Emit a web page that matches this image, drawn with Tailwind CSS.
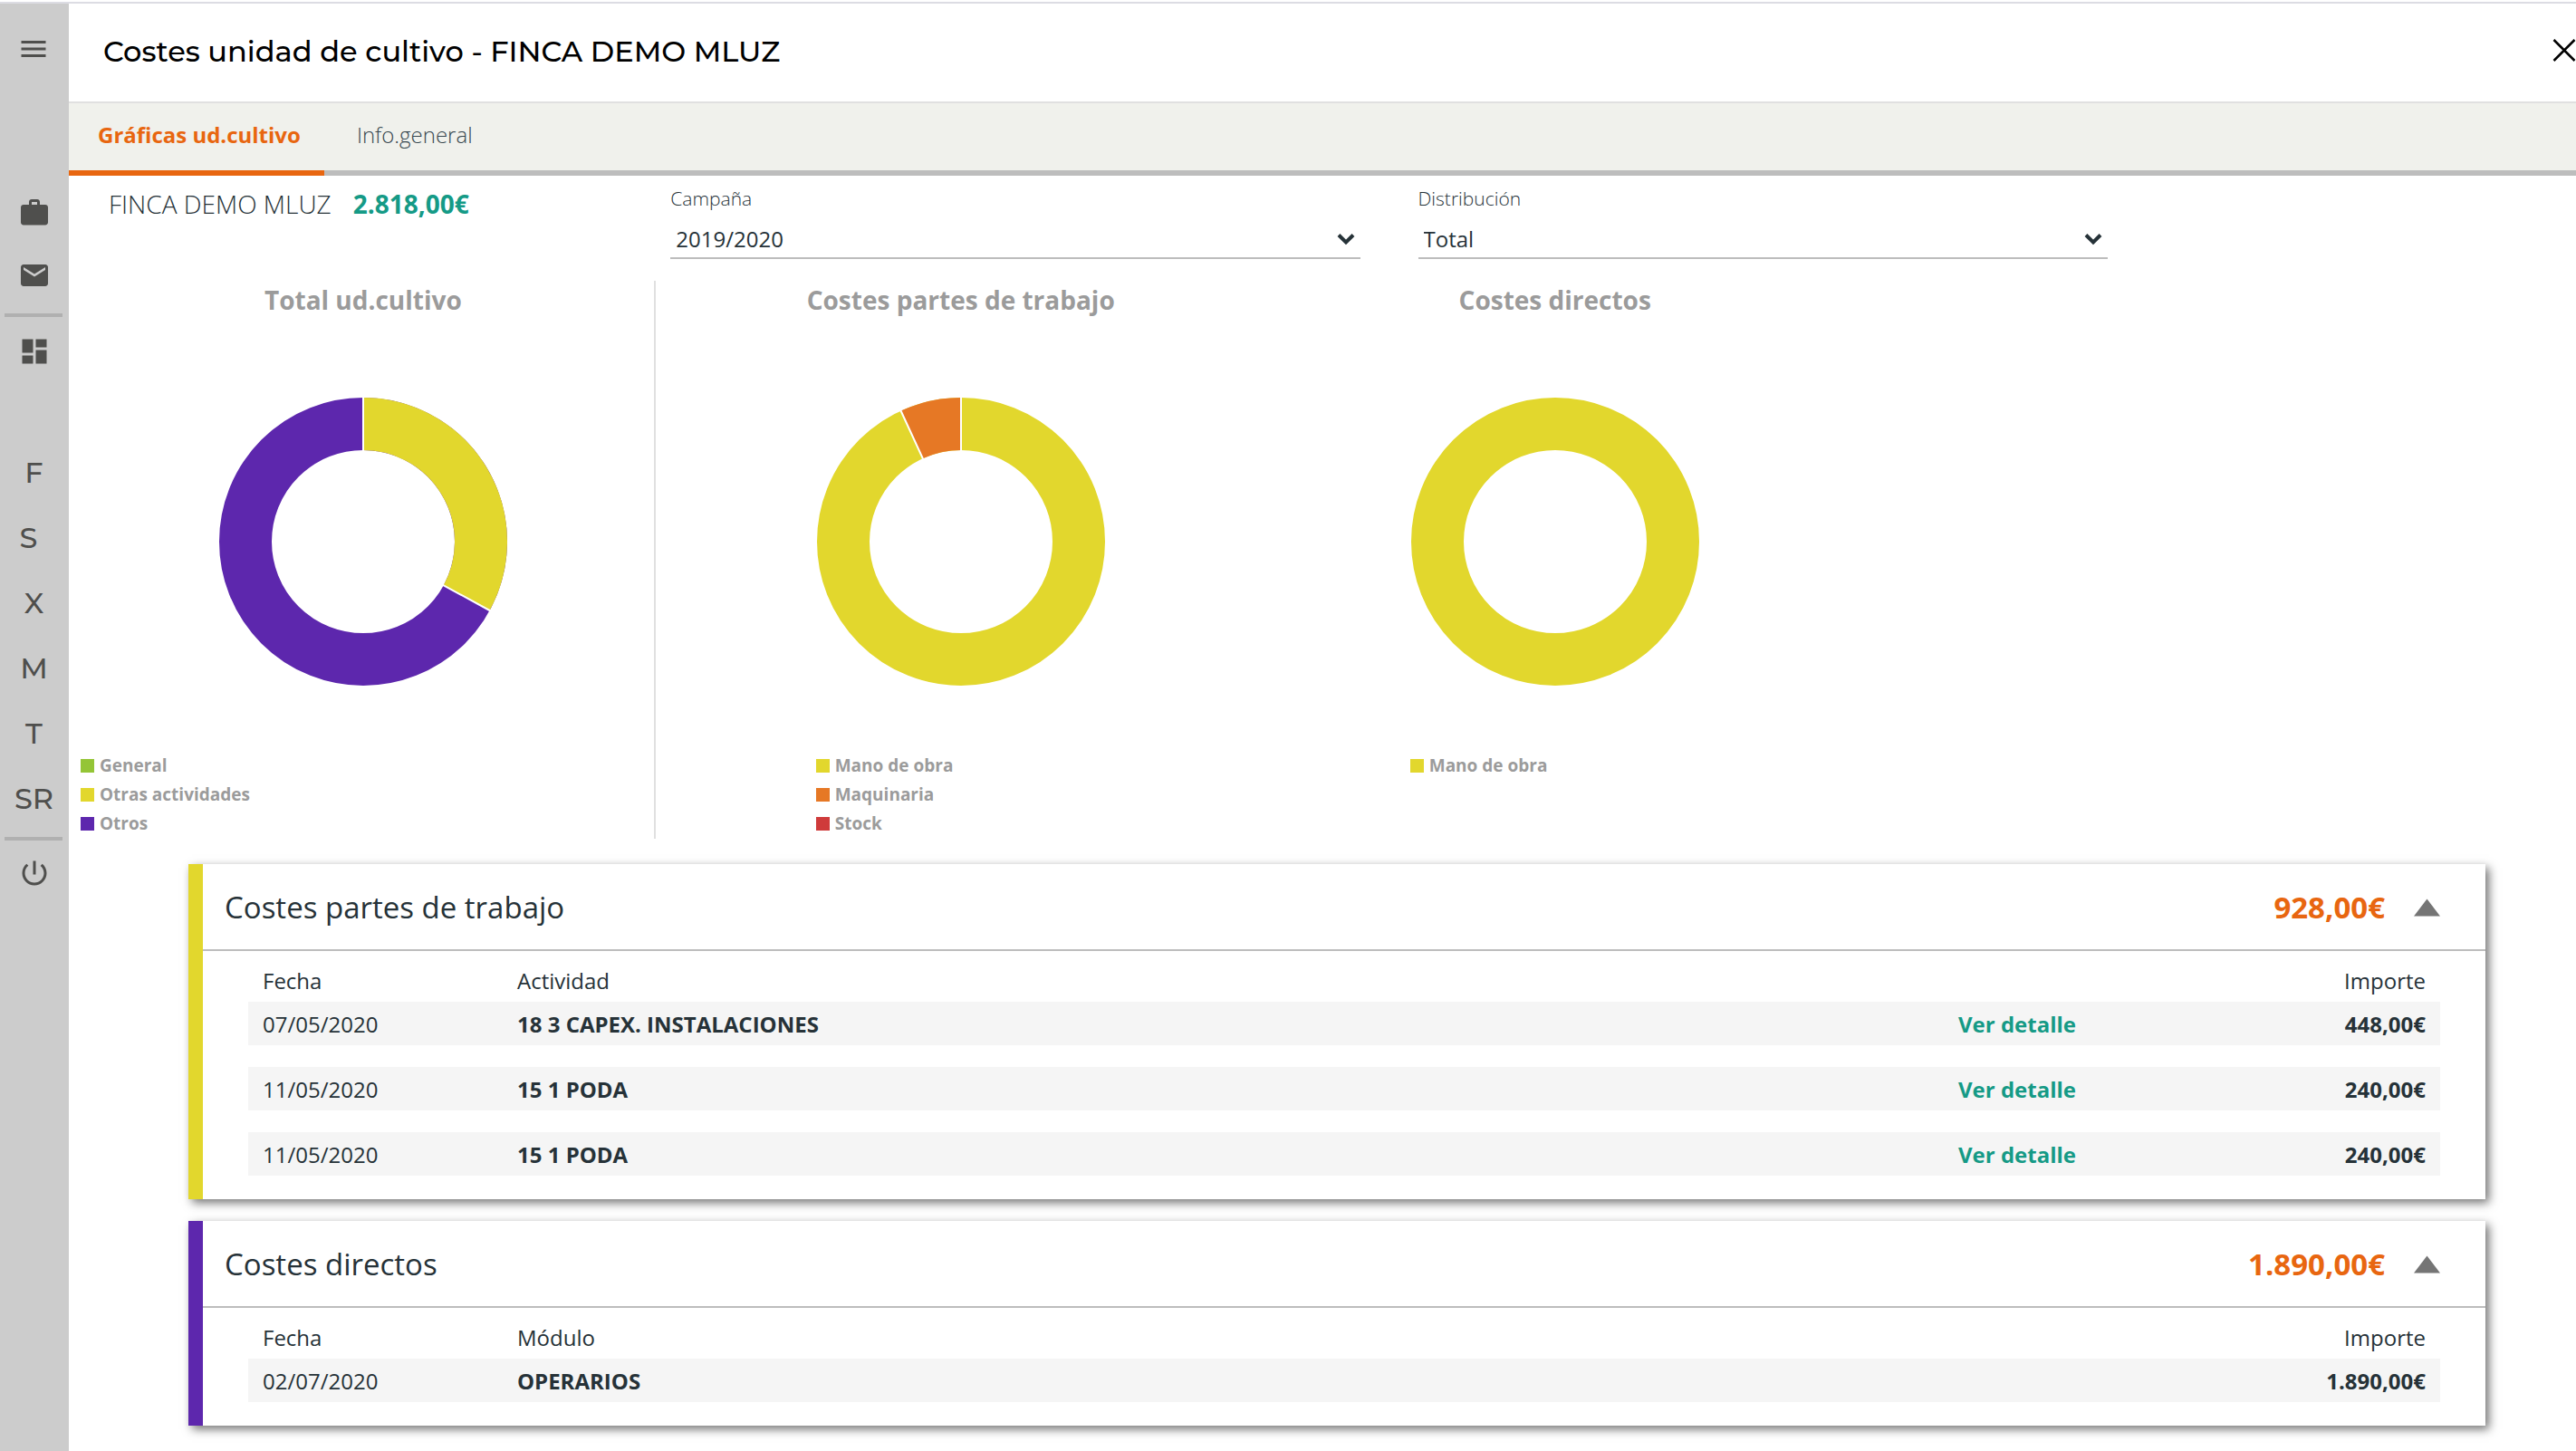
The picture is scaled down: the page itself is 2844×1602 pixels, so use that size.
<!DOCTYPE html>
<html lang="es">
<head>
<meta charset="utf-8">
<meta name="viewport" content="width=device-width, initial-scale=1">
<title>Costes unidad de cultivo - FINCA DEMO MLUZ</title>
<script src="https://cdn.jsdelivr.net/npm/@tailwindcss/browser@4"></script>
</head>
<body class="flex min-h-screen flex-col bg-white font-['Open_Sans',sans-serif] text-2xl text-[#263238]">
<div class="mt-0.5 h-0.5 shrink-0 bg-[#dcdce3]"></div>
<div class="flex flex-1">

  <!-- Sidebar -->
  <nav aria-label="Menú principal" class="flex w-19 shrink-0 flex-col items-center bg-[#cccccc] pt-8 pr-px font-['Montserrat','Inter',sans-serif] text-[32px] font-medium text-[#4f4f4d]">
    <button type="button" aria-label="Menú" class="mr-0.5"><svg class="size-9" viewBox="0 0 24 24" fill="currentColor"><path d="M3 18h18v-2H3v2zm0-5h18v-2H3v2zm0-7v2h18V6H3z"/></svg></button>
    <a href="#" aria-label="Trabajo" class="mt-[145px]"><svg class="size-9" viewBox="0 0 24 24" fill="currentColor"><path d="M20 6h-4V4c0-1.110-.89-2-2-2h-4c-1.110 0-2 .89-2 2v2H4c-1.110 0-1.990.89-1.990 2L2 19c0 1.110.89 2 2 2h16c1.110 0 2-.89 2-2V8c0-1.110-.89-2-2-2zm-6 0h-4V4h4v2z"/></svg></a>
    <a href="#" aria-label="Correo" class="mt-[33px]"><svg class="size-9" viewBox="0 0 24 24" fill="currentColor"><path d="M20 4H4c-1.100 0-1.990.9-1.990 2L2 18c0 1.100.9 2 2 2h16c1.100 0 2-.9 2-2V6c0-1.100-.9-2-2-2zm0 4l-8 5-8-5V6l8 5 8-5v2z"/></svg></a>
    <hr class="mt-6 mr-0.5 h-1 w-16 border-0 bg-[#b0b0b0]">
    <a href="#" aria-label="Panel" class="mt-5"><svg class="size-9" viewBox="0 0 24 24" fill="currentColor"><path d="M3 13h8V3H3v10zm0 8h8v-6H3v6zm10 0h8V11h-8v10zm0-18v6h8V3h-8z"/></svg></a>
    <a href="#" class="mt-20 flex h-18 items-center">F</a>
    <a href="#" class="mr-3 flex h-18 items-center">S</a>
    <a href="#" class="flex h-18 items-center">X</a>
    <a href="#" class="flex h-18 items-center">M</a>
    <a href="#" class="flex h-18 items-center">T</a>
    <a href="#" class="flex h-18 items-center">SR</a>
    <hr class="mt-1.5 mr-0.5 h-1 w-16 border-0 bg-[#b0b0b0]">
    <button type="button" aria-label="Salir" class="mt-4.5"><svg class="size-9" viewBox="0 0 24 24" fill="currentColor"><path d="M13 3h-2v10h2V3zm4.830 2.170l-1.420 1.420C17.990 7.860 19 9.810 19 12c0 3.870-3.130 7-7 7s-7-3.130-7-7c0-2.190 1.010-4.140 2.580-5.420L6.170 5.170C4.230 6.820 3 9.260 3 12c0 4.970 4.030 9 9 9s9-4.030 9-9c0-2.740-1.230-5.180-3.170-6.830z"/></svg></button>
  </nav>

  <main class="min-w-0 flex-1">
    <header class="flex h-[110px] items-center justify-between border-b-2 border-[#e0e0e0] pb-0.5 pl-[38px]">
      <h1 class="font-['Montserrat','Inter',sans-serif] text-[32px] font-medium text-black">Costes unidad de cultivo - FINCA DEMO MLUZ</h1>
      <button type="button" aria-label="Cerrar" class="pb-1 text-black"><svg class="size-[26px]" viewBox="0 0 26 26" fill="none" stroke="currentColor" stroke-width="2.500"><path d="M1.500 2l23 23M24.500 2l-23 23"/></svg></button>
    </header>

    <!-- Tabs -->
    <div role="tablist" class="flex h-20 bg-[#f0f1ec]">
      <button type="button" role="tab" aria-selected="true" class="border-b-6 border-[#e86610] pr-[26px] pb-1 pl-8 font-bold text-[#e86610]">Gráficas ud.cultivo</button>
      <button type="button" role="tab" aria-selected="false" class="border-b-6 border-[#bdbdbd] px-9 pb-1 font-light text-[#37474f]">Info.general</button>
      <span class="flex-1 border-b-6 border-[#bdbdbd]"></span>
    </div>

    <!-- Summary and filters -->
    <section class="flex h-[116px] items-start pt-[9px]">
      <p class="flex w-[24%] gap-6 pt-0.5 pl-11 text-[28px] leading-10"><span class="font-light">FINCA DEMO MLUZ</span><strong class="font-bold text-[#159a86]">2.818,00€</strong></p>
      <div class="flex w-[27.5%] flex-col gap-[9px]">
        <label for="campana" class="text-[21px] leading-8 font-light">Campaña</label>
        <div class="relative">
          <select id="campana" class="block h-[42px] w-full appearance-none border-b-2 border-[#bdbdbd] bg-transparent pl-1.5 leading-10"><option>2019/2020</option></select>
          <svg class="pointer-events-none absolute top-3 right-1.5 h-4 w-5" viewBox="0 0 20 16" fill="none" stroke="currentColor" stroke-width="4"><path d="M2 3.500l8 8 8-8"/></svg>
        </div>
      </div>
      <div class="ml-16 flex w-[27.5%] flex-col gap-[9px]">
        <label for="distribucion" class="text-[21px] leading-8 font-light">Distribución</label>
        <div class="relative">
          <select id="distribucion" class="block h-[42px] w-full appearance-none border-b-2 border-[#bdbdbd] bg-transparent pl-1.5 leading-10"><option>Total</option></select>
          <svg class="pointer-events-none absolute top-3 right-1.5 h-4 w-5" viewBox="0 0 20 16" fill="none" stroke="currentColor" stroke-width="4"><path d="M2 3.500l8 8 8-8"/></svg>
        </div>
      </div>
    </section>

    <!-- Charts -->
    <section class="flex text-[19px] font-bold text-[#9b9b9b]">
      <figure class="flex w-[23.4%] flex-col border-r-2 border-[#e0e0e0] pb-px pl-1">
        <h2 class="text-center text-[28px] leading-[42px]">Total ud.cultivo</h2>
        <svg class="mx-auto mt-[86px] size-80" viewBox="-160 -160 320 320" fill="none">
          <circle r="130" stroke="#5d27ad" stroke-width="58"/>
          <path d="M0 -130A130 130 0 0 1 114.200 62.100" stroke="#e2d72d" stroke-width="58"/>
          <path d="M0 -98V-160M86.100 46.800L140.500 76.500" stroke="#fff" stroke-width="2"/>
        </svg>
        <ul class="mt-[71px] pl-[9px] leading-8">
          <li class="flex items-center gap-1.5"><span class="size-[15px] bg-[#94c536]"></span>General</li>
          <li class="flex items-center gap-1.5"><span class="size-[15px] bg-[#e2d72d]"></span>Otras actividades</li>
          <li class="flex items-center gap-1.5"><span class="size-[15px] bg-[#5d27ad]"></span>Otros</li>
        </ul>
      </figure>
      <figure class="ml-[9px] flex w-[23.7%] flex-col items-center">
        <h2 class="text-[28px] leading-[42px]">Costes partes de trabajo</h2>
        <svg class="mt-[86px] size-80" viewBox="-160 -160 320 320" fill="none">
          <circle r="130" stroke="#e2d72d" stroke-width="58"/>
          <path d="M-54.300 -118.100A130 130 0 0 1 0 -130" stroke="#e67825" stroke-width="58"/>
          <path d="M0 -98V-160M-40.900 -89L-66.900 -145.500" stroke="#fff" stroke-width="2"/>
        </svg>
        <ul class="mt-[71px] w-80 leading-8">
          <li class="flex items-center gap-1.5"><span class="size-[15px] bg-[#e2d72d]"></span>Mano de obra</li>
          <li class="flex items-center gap-1.5"><span class="size-[15px] bg-[#e67825]"></span>Maquinaria</li>
          <li class="flex items-center gap-1.5"><span class="size-[15px] bg-[#cf3b3b]"></span>Stock</li>
        </ul>
      </figure>
      <figure class="flex w-[23.7%] flex-col items-center">
        <h2 class="text-[28px] leading-[42px]">Costes directos</h2>
        <svg class="mt-[86px] size-80" viewBox="-160 -160 320 320" fill="none"><circle r="130" stroke="#e2d72d" stroke-width="58"/></svg>
        <ul class="mt-[71px] w-80 leading-8">
          <li class="flex items-center gap-1.5"><span class="size-[15px] bg-[#e2d72d]"></span>Mano de obra</li>
        </ul>
      </figure>
    </section>

    <!-- Cost cards -->
    <div class="mt-7 mr-[100px] mb-7 ml-[132px] flex flex-col gap-6">
      <section class="border-l-16 border-[#e2d72d] bg-white shadow-[4px_4px_10px_rgba(0,0,0,0.55)]">
        <div class="flex h-24 items-center border-b-2 border-[#bdbdbd] pt-0.5 pr-[50px] pl-6 text-[33px]">
          <h2 class="flex-1">Costes partes de trabajo</h2>
          <strong class="font-bold text-[#e86610]">928,00€</strong>
          <button type="button" aria-label="Contraer" class="ml-8 text-[#757575]"><svg class="h-5 w-[29px]" viewBox="0 0 29 20" fill="currentColor"><path d="M14.500 .5L29 19.500H0z"/></svg></button>
        </div>
        <div class="pr-[50px] pb-0.5 pl-[50px]">
          <table class="w-full table-fixed border-separate border-spacing-0 leading-9">
            <colgroup><col class="w-[281px]"><col><col class="w-[274px]"><col class="w-[274px]"></colgroup>
            <thead>
              <tr class="h-14 text-left"><th class="px-4 pt-2.5 font-normal">Fecha</th><th class="px-4 pt-2.5 font-normal">Actividad</th><td></td><th class="px-4 pt-2.5 text-right font-normal">Importe</th></tr>
            </thead>
            <tbody class="[&_td]:h-18 [&_td]:border-b-24 [&_td]:border-transparent [&_td]:bg-[#f5f5f5] [&_td]:bg-clip-padding [&_td]:px-4 [&_td]:pt-0.5">
              <tr><td>07/05/2020</td><td class="font-bold">18 3 CAPEX. INSTALACIONES</td><td><a href="#" class="font-bold text-[#159a86]">Ver detalle</a></td><td class="text-right font-bold">448,00€</td></tr>
              <tr><td>11/05/2020</td><td class="font-bold">15 1 PODA</td><td><a href="#" class="font-bold text-[#159a86]">Ver detalle</a></td><td class="text-right font-bold">240,00€</td></tr>
              <tr><td>11/05/2020</td><td class="font-bold">15 1 PODA</td><td><a href="#" class="font-bold text-[#159a86]">Ver detalle</a></td><td class="text-right font-bold">240,00€</td></tr>
            </tbody>
          </table>
        </div>
      </section>

      <section class="border-l-16 border-[#5d27ad] bg-white shadow-[4px_4px_10px_rgba(0,0,0,0.55)]">
        <div class="flex h-24 items-center border-b-2 border-[#bdbdbd] pt-0.5 pr-[50px] pl-6 text-[33px]">
          <h2 class="flex-1">Costes directos</h2>
          <strong class="font-bold text-[#e86610]">1.890,00€</strong>
          <button type="button" aria-label="Contraer" class="ml-8 text-[#757575]"><svg class="h-5 w-[29px]" viewBox="0 0 29 20" fill="currentColor"><path d="M14.500 .5L29 19.500H0z"/></svg></button>
        </div>
        <div class="pr-[50px] pb-0.5 pl-[50px]">
          <table class="w-full table-fixed border-separate border-spacing-0 leading-9">
            <colgroup><col class="w-[281px]"><col><col class="w-[274px]"></colgroup>
            <thead>
              <tr class="h-14 text-left"><th class="px-4 pt-2.5 font-normal">Fecha</th><th class="px-4 pt-2.5 font-normal">Módulo</th><th class="px-4 pt-2.5 text-right font-normal">Importe</th></tr>
            </thead>
            <tbody class="[&_td]:h-18 [&_td]:border-b-24 [&_td]:border-transparent [&_td]:bg-[#f5f5f5] [&_td]:bg-clip-padding [&_td]:px-4 [&_td]:pt-0.5">
              <tr><td>02/07/2020</td><td class="font-bold">OPERARIOS</td><td class="text-right font-bold">1.890,00€</td></tr>
            </tbody>
          </table>
        </div>
      </section>
    </div>
  </main>
</div>
</body>
</html>
